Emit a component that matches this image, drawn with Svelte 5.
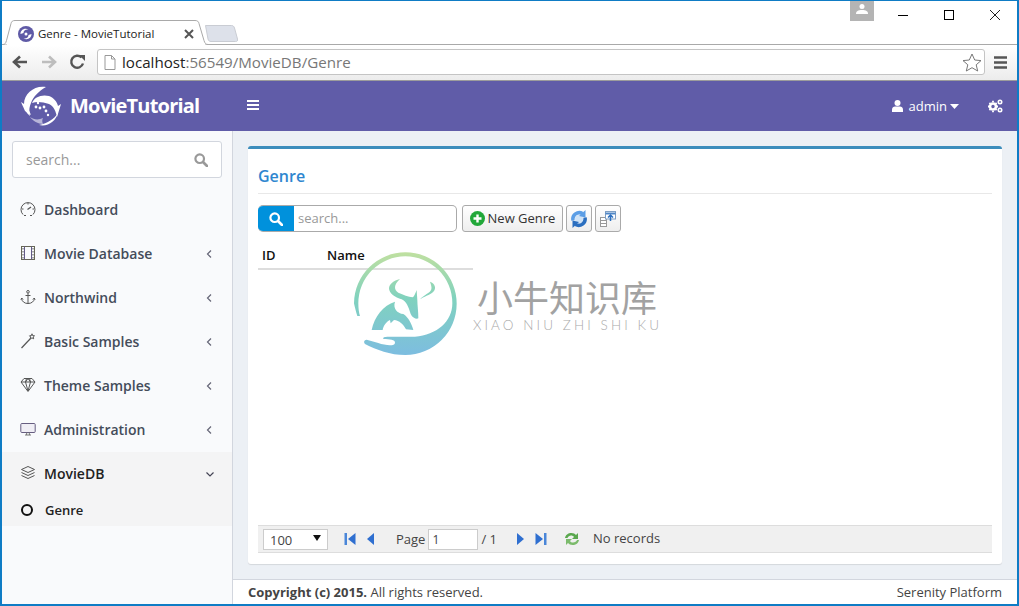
<script>
  const menu = [
    { label: 'Dashboard', icon: 'gauge', arrow: false },
    { label: 'Movie Database', icon: 'film', arrow: true },
    { label: 'Northwind', icon: 'anchor', arrow: true },
    { label: 'Basic Samples', icon: 'wand', arrow: true },
    { label: 'Theme Samples', icon: 'gem', arrow: true },
    { label: 'Administration', icon: 'desktop', arrow: true }
  ];
</script>

{#snippet searchIcon(c)}
  <svg width="14" height="14" viewBox="0 0 14 14" fill="none" stroke={c} stroke-width="2.2"><circle cx="5.7" cy="5.7" r="4.3"/><path d="M9 9l4 4" stroke-linecap="round" stroke-width="2.6"/></svg>
{/snippet}

{#snippet menuIcon(name)}
  <svg class="micon" width="16" height="16" viewBox="0 0 16 16" fill="none" stroke="#555" stroke-width="1">
    {#if name === 'gauge'}
      <path d="M3 13.500A7 7 0 1 1 13 13.500"/><path d="M4 14.500h8" stroke-dasharray="2 4"/><path d="M7.500 8.500l3.500-2.500" stroke-width="1.300"/><path d="M8 2v1.500M2 8h1.500M12.500 8H14" />
    {:else if name === 'film'}
      <rect x="1.500" y="1.500" width="13" height="13" stroke="#665"/><path d="M4.500 1.500v13M11.500 1.500v13" stroke="#635a88"/><path d="M3 3v11M13 3v11" stroke-dasharray="1.500 1.500"/>
    {:else if name === 'anchor'}
      <circle cx="8" cy="2.800" r="1.300"/><path d="M8 4.200V14.500M5.500 6.500h5M1.500 9.500c.5 3 3 5 6.500 5s6-2 6.500-5M.8 10.500l1-1.500 1.300 1.500M12.900 10.500l1.300-1.500 1 1.500"/>
    {:else if name === 'wand'}
      <path d="M1.500 15L10.500 5.500" stroke-width="1.200"/><path d="M12 .8l.6 1.800 1.900.2-1.300 1.200.5 1.800-1.700-.9-1.700.9.4-1.800L9.500 2.800l1.900-.2z"/>
    {:else if name === 'gem'}
      <path d="M4 1.500h8l3 3.500L8 14.500 1 5z"/><path d="M1 5h14M5.500 5L8 14M10.500 5L8 14M5.500 5L6.500 1.500M10.500 5L9.500 1.500M5.500 5L8 1.500l2.500 3.500"/>
    {:else if name === 'desktop'}
      <rect x=".8" y="2.500" width="14.400" height="9" rx="1" fill="#f0eef5" stroke="#665d80"/><path d="M5 14h6M6.800 11.500l-.3 2.500M9.200 11.500l.3 2.500" stroke="#777"/>
    {:else}
      <path d="M8 1.500l6.500 3L8 7.500l-6.500-3z"/><path d="M1.500 7.500L8 10.500l6.500-3M1.500 10.500L8 13.500l6.500-3"/>
    {/if}
  </svg>
{/snippet}

<div class="window">
  <div class="tabstrip">
    <div class="tab">
      <svg class="tabshape" width="212" height="26" viewBox="0 0 212 26"><path d="M0 24.500h1c2 0 2.500-1 3.500-4L9 3.500C9.500 1.500 10.500 .5 13 .5h180c2.500 0 3.500 1 4 3l5 17c.8 2.800 2 4 4 4h3" fill="#fff" stroke="#a9a9a9"/><rect x="5" y="23" width="198" height="3" fill="#fff"/></svg>
      <svg class="favicon" width="16" height="16" viewBox="0 0 16 16"><circle cx="8" cy="8" r="8" fill="#5f5aa6"/><path d="M2.500 8c0-4 4-6.500 8-4.500-3-.5-5 1-5 3.500zM13.500 8c0 4-4 6.500-8 4.500 3 .5 5-1 5-3.500z" fill="#fff"/><circle cx="8" cy="8" r="1.500" fill="#fff"/></svg>
      <span class="tabtitle">Genre - MovieTutorial</span>
      <svg class="tabx" width="10" height="10" viewBox="0 0 10 10"><path d="M1 1l8 8M9 1l-8 8" stroke="#555" stroke-width="2"/></svg>
    </div>
    <svg class="newtab" width="33" height="17" viewBox="0 0 33 17"><path d="M.5 .5h26c1.500 0 2.300.6 3 2.500l3 11c.4 1.500 0 2.500-2 2.500H6c-1.500 0-2.500-.6-3-2.500z" fill="#dde1ea" stroke="#c9ccd3"/></svg>
    <div class="spacer"></div>
    <div class="profile"><svg width="12" height="10" viewBox="0 0 12 10"><circle cx="6" cy="2.500" r="2.500" fill="#fff"/><path d="M0 10c0-3 2-4 6-4s6 1 6 4z" fill="#fff"/></svg></div>
    <div class="winbtn"><svg width="12" height="12" viewBox="0 0 12 12"><path d="M1 6.500h10" stroke="#000"/></svg></div>
    <div class="winbtn"><svg width="12" height="12" viewBox="0 0 12 12"><rect x="1.500" y="1.500" width="9" height="9" fill="none" stroke="#000"/></svg></div>
    <div class="winbtn last"><svg width="12" height="12" viewBox="0 0 12 12"><path d="M1 1l10 10M11 1L1 11" stroke="#222"/></svg></div>
  </div>

  <div class="toolbar">
    <svg class="navb" width="18" height="16" viewBox="0 0 18 16"><path d="M16 8H4M9 2.500L3 8l6 5.500" fill="none" stroke="#555" stroke-width="2.600"/></svg>
    <svg class="navb" width="18" height="16" viewBox="0 0 18 16"><path d="M2 8h12M9 2.500L15 8l-6 5.500" fill="none" stroke="#bdbdbd" stroke-width="2.600"/></svg>
    <svg class="navb" width="18" height="16" viewBox="0 0 18 16"><path d="M14 9.500A6 6 0 1 1 12.500 3.500" fill="none" stroke="#555" stroke-width="2.400"/><path d="M10 1h6v6z" fill="#555"/></svg>
    <div class="omnibox">
      <svg width="12" height="15" viewBox="0 0 12 15"><path d="M1 .5h6.500L11 4v10.500H1z" fill="#fff" stroke="#999"/><path d="M7.500 .5V4H11" fill="none" stroke="#999"/></svg>
      <span class="url"><b>localhost</b>:56549/MovieDB/Genre</span>
      <svg class="star" width="20" height="19" viewBox="0 0 20 19"><path d="M10 1l2.700 6 6.300.6-4.800 4.200 1.500 6.200L10 14.700 4.300 18l1.500-6.200L1 7.600 7.300 7z" fill="#fff" stroke="#777"/></svg>
    </div>
    <svg width="14" height="13" viewBox="0 0 14 13"><path d="M0 1.500h13M0 6.500h13M0 11.500h13" stroke="#555" stroke-width="2.400"/></svg>
  </div>

  <header class="apphead">
    <div class="brand">
      <svg width="40" height="40" viewBox="0 0 40 40">
        <g fill="#fff">
          <path d="M25 1C14-1 3 7 3 18c0 5 2 9 6 12-1-5-1-8 1-13 2-6 8-12 15-16z"/>
          <path d="M0 16l6 4 4 9-6-4z"/>
          <path d="M11 17c2-6 10-9 17-7 5 2 8 6 9 10l3-2-4 13c-1-5-3-11-8-13-6-2-12-3-17-1z"/>
          <path d="M9 31c4 3 9 3 13 1-1 2-1 4 0 6-5 0-10-3-13-7z" opacity=".55"/>
          <path d="M18 39c9 2 17-4 19-12-4 6-10 10-19 12z"/>
          <circle cx="15" cy="21" r="1.400"/><circle cx="19" cy="22" r="1.400"/><circle cx="23" cy="21" r="1.400"/><circle cx="25" cy="25" r="1.400"/><circle cx="27" cy="29" r="1.200"/><circle cx="17" cy="17" r="1.200"/>
        </g>
      </svg>
      <span class="brandtext">MovieTutorial</span>
    </div>
    <svg class="burger" width="12" height="12" viewBox="0 0 12 12"><path d="M0 2h12M0 6h12M0 10h12" stroke="#fff" stroke-width="2"/></svg>
    <div class="spacer"></div>
    <svg width="11" height="12" viewBox="0 0 11 12"><circle cx="5.500" cy="3" r="3" fill="#fff"/><path d="M0 12V9.500C0 7.500 1.500 6.500 3 6.500h5c1.500 0 3 1 3 3V12z" fill="#fff"/></svg>
    <span class="admin">admin</span>
    <svg class="caret" width="9" height="5" viewBox="0 0 9 5"><path d="M0 0h9L4.500 5z" fill="#fff"/></svg>
    <svg class="cogs" width="15" height="14" viewBox="0 0 15 14" fill="none" stroke="#fff"><circle cx="5" cy="7.500" r="3" stroke-width="2.600"/><path d="M5 1.800v1.400M5 11.800v1.400M0 7.500h1.400M8.600 7.500H10M1.400 3.900l1 1M7.600 10.100l1 1M1.400 11.100l1-1M7.600 4.900l1-1" stroke-width="1.800"/><circle cx="12" cy="3" r="1.700" stroke-width="1.600"/><circle cx="12" cy="11" r="1.700" stroke-width="1.600"/></svg>
  </header>

  <div class="body">
    <aside class="sidebar">
      <div class="sidesearch">
        <span>search...</span>
        {@render searchIcon('#999')}
      </div>
      <nav>
        {#each menu as m}
          <div class="item">
            {@render menuIcon(m.icon)}
            <span class="label">{m.label}</span>
            {#if m.arrow}
              <svg class="chev" width="6" height="10" viewBox="0 0 6 10"><path d="M5 1.500L1.500 5 5 8.500" fill="none" stroke="#667" stroke-width="1.200"/></svg>
            {/if}
          </div>
        {/each}
        <div class="openmenu">
          <div class="item active">
            {@render menuIcon('layers')}
            <span class="label">MovieDB</span>
            <svg class="chevd" width="10" height="6" viewBox="0 0 10 6"><path d="M1.500 1.500L5 5l3.500-3.500" fill="none" stroke="#445" stroke-width="1.200"/></svg>
          </div>
          <div class="subitem"><i class="ring"></i><span>Genre</span></div>
        </div>
      </nav>
    </aside>

    <div class="maincol">
      <main class="content">
        <section class="card">
          <h1>Genre</h1>
          <div class="tools">
            <div class="qsearch">
              <span class="addon">{@render searchIcon('#fff')}</span>
              <span class="ph">search...</span>
            </div>
            <div class="btn add">
              <svg width="15" height="15" viewBox="0 0 15 15"><circle cx="7.500" cy="7.500" r="7.500" fill="#22a83a"/><path d="M7.500 3.500v8M3.500 7.500h8" stroke="#fff" stroke-width="2.400"/></svg>
              <span class="addtext">New Genre</span>
            </div>
            <div class="btn ico">
              <svg width="18" height="18" viewBox="0 0 18 18" fill="none"><circle cx="9" cy="9" r="4" fill="#cfe3f7"/><path d="M3 10.500A6.500 6.500 0 0 1 12.500 3.500" stroke="#5b9ee6" stroke-width="3.500"/><path d="M15.500 0v7.500L9 6z" fill="#5b9ee6"/><path d="M15 7.500A6.500 6.500 0 0 1 5.500 14.500" stroke="#2b6fc0" stroke-width="3.500"/><path d="M2.500 18v-7.500L9 12z" fill="#2b6fc0"/></svg>
            </div>
            <div class="btn ico">
              <svg width="18" height="18" viewBox="0 0 18 18"><rect x="1.500" y="7.500" width="6" height="9" fill="#fff" stroke="#999"/><path d="M1.500 10.500h6M1.500 13.500h6" stroke="#999"/><rect x="6.500" y="1.500" width="10" height="7.500" fill="#fff" stroke="#7f9fc4"/><path d="M6.500 3.500h10" stroke="#4f86c6" stroke-width="2"/><path d="M11.500 11V6M9 7.500l2.500-2.500L14 7.500" fill="none" stroke="#2b6fc0" stroke-width="1.500"/></svg>
            </div>
          </div>
          <div class="gridhead">
            <span class="cid">ID</span>
            <span class="cname">Name</span>
          </div>
          <div class="gridbody"></div>
          <div class="pager">
            <div class="pagesize"><span>100</span><svg width="8" height="6" viewBox="0 0 8 6"><path d="M0 0h8L4 6z" fill="#111"/></svg></div>
            <svg class="p-first" width="12" height="12" viewBox="0 0 12 12"><path d="M.5 0h2.500v12H.5z" fill="#4a86d8"/><path d="M11.500 0v12L4 6z" fill="#2f6fd0"/></svg>
            <svg class="p-prev" width="7" height="12" viewBox="0 0 7 12"><path d="M7 0v12L0 6z" fill="#2f6fd0"/></svg>
            <span class="pg">Page</span>
            <div class="pageinput">1</div>
            <span class="of">/ 1</span>
            <svg class="p-next" width="7" height="12" viewBox="0 0 7 12"><path d="M0 0v12l7-6z" fill="#2f6fd0"/></svg>
            <svg class="p-last" width="12" height="12" viewBox="0 0 12 12"><path d="M.5 0v12L8 6z" fill="#2f6fd0"/><path d="M9 0h2.500v12H9z" fill="#4a86d8"/></svg>
            <svg class="p-reload" width="18" height="16" viewBox="0 0 18 16"><path d="M2 7c.5-3 3-5 6.500-5 2 0 3.500.7 4.500 2l2-2v6h-6l2-2c-.7-1-1.700-1.500-3-1.500C6.500 4.500 5 5.500 4.500 7z" fill="#5aa84e"/><path d="M16 9c-.5 3-3 5-6.500 5-2 0-3.500-.7-4.500-2l-2 2V8h6l-2 2c.7 1 1.700 1.500 3 1.500 2 0 3.500-1 4-2.500z" fill="#7cbb6c"/></svg>
            <span class="norec">No records</span>
          </div>
        </section>
      </main>
      <footer class="foot">
        <span><b>Copyright (c) 2015.</b> All rights reserved.</span>
        <span>Serenity Platform</span>
      </footer>
    </div>
  </div>

  <div class="watermark">
    <svg width="112" height="108" viewBox="0 0 112 108">
      <defs>
        <linearGradient id="wm" gradientUnits="userSpaceOnUse" x1="0" y1="36" x2="0" y2="345">
          <stop offset="0" stop-color="#c0e0a0"/>
          <stop offset=".45" stop-color="#80d2be"/>
          <stop offset="1" stop-color="#7dbde0"/>
        </linearGradient>
      </defs>
      <g transform="translate(-10,-8) scale(.33333)" fill="url(#wm)">
        <path d="M52 228C45 205 42 190 42 190A154 154 0 1 1 196 345C150 345 110 330 75 312C70 308 72 299 80 299L115 309C135 316 165 320 165 308C165 298 150 298 130 297C128 291 135 290 150 290L225 290C290 285 337 245 337 190A141 141 0 0 0 55 190C55 205 57 220 60 228Z"/>
        <path d="M180 117C160 122 148 132 147 145C147 160 165 172 185 178C200 185 205 200 212 222C218 235 230 238 235 235C235 215 232 195 232 180L230 150C226 160 222 170 218 172C205 170 190 165 175 158C162 150 160 135 180 117Z"/>
        <path d="M165 185C130 195 103 230 95 270L128 270C130 258 138 246 150 240L152 250L162 240C178 242 190 252 198 268L220 270C215 250 205 232 190 222C172 220 158 205 165 185Z"/>
        <path d="M270 125C285 130 290 145 280 155C270 165 250 170 240 178C252 165 270 160 274 148C276 140 272 132 270 125Z"/>
      </g>
    </svg>
    <div class="wmtext">
      <div class="cn">小牛知识库</div>
      <div class="en">XIAO NIU ZHI SHI KU</div>
    </div>
  </div>
</div>

<style>
  :global(body) { margin: 0; background: #fff; }
  .window {
    position: relative;
    box-sizing: border-box;
    width: 1019px;
    height: 606px;
    border: solid #0f7cc5;
    border-width: 1px 2px 2px 2px;
    display: flex;
    flex-direction: column;
    overflow: hidden;
    font-family: "Open Sans", sans-serif;
    color: #444;
    background: #fff;
  }
  .spacer { flex: 1; }
  .tabstrip {
    height: 44px;
    flex: none;
    box-sizing: border-box;
    display: flex;
    align-items: flex-start;
    padding-top: 19px;
    position: relative;
    background: linear-gradient(#a9a9a9, #a9a9a9) left 43px / 100% 1px no-repeat #fff;
  }
  .tab {
    position: relative;
    width: 203px;
    height: 25px;
    flex: none;
    display: flex;
    align-items: center;
    padding-left: 16px;
    box-sizing: border-box;
  }
  .tabshape { position: absolute; left: 0; top: 0; }
  .favicon { position: relative; margin-top: 2px; }
  .tabtitle { position: relative; font: 11.500px "Open Sans", sans-serif; color: #222; margin-left: 4px; margin-top: 1px; flex: 1; }
  .tabx { position: relative; margin-right: 11px; margin-top: 2px; }
  .newtab { margin-top: 5px; flex: none; }
  .profile {
    align-self: flex-start;
    width: 24px;
    height: 20px;
    margin-top: -19px;
    background: #b4b4b4;
    display: flex;
    align-items: center;
    justify-content: center;
    margin-right: 6px;
  }
  .profile svg { margin-top: -4px; }
  .winbtn {
    width: 46px;
    margin-top: -11px;
    display: flex;
    justify-content: center;
  }
  .last { margin-right: -1px; }
  .toolbar {
    height: 36px;
    flex: none;
    box-sizing: border-box;
    display: flex;
    align-items: center;
    gap: 11px;
    padding: 0 9px 1px 9px;
    background: linear-gradient(#fff, #ececec);
    border-bottom: 1px solid #9c9c9c;
  }
  .navb { flex: none; }
  .omnibox {
    flex: 1;
    height: 26px;
    margin: 0 -2px 0 -1px;
    box-sizing: border-box;
    display: flex;
    align-items: center;
    border: 1px solid #c4c4c4;
    border-radius: 3px;
    background: #fff;
    padding: 0 2px 0 6px;
    gap: 6px;
  }
  .url { flex: 1; font-size: 15.150px; color: #777; }
  .url b { font-weight: 400; color: #222; }
  .apphead {
    height: 50px;
    flex: none;
    background: #605ca8;
    display: flex;
    align-items: center;
    padding-right: 14px;
    color: #fff;
  }
  .brand { width: 245px; padding-left: 19px; box-sizing: border-box; display: flex; align-items: center; gap: 9px; flex: none; }
  .brandtext { font-size: 20px; font-weight: 700; letter-spacing: -.8px; margin-top: -2px; }
  .burger { flex: none; margin-top: -3px; }
  .admin { font-size: 13px; margin-left: 6px; }
  .caret { margin: 0 0 0 3px; }
  .cogs { margin-left: 29px; }
  .body { flex: 1; min-height: 0; display: flex; }
  .sidebar {
    width: 231px;
    flex: none;
    box-sizing: border-box;
    background: #f9fafc;
    border-right: 1px solid #d2d6de;
    padding-top: 10px;
  }
  .sidesearch {
    margin: 0 10px;
    height: 37px;
    box-sizing: border-box;
    background: #fff;
    border: 1px solid #d2d6de;
    border-radius: 3px;
    padding: 0 13px;
    display: flex;
    align-items: center;
    justify-content: space-between;
    font-size: 14px;
    color: #999;
  }
  nav { margin-top: 10px; }
  .item {
    height: 44px;
    display: flex;
    align-items: center;
    padding: 0 18px 0 18px;
    font-size: 14px;
    font-weight: 600;
    color: #444c5a;
  }
  .micon { flex: none; margin-right: 8px; margin-top: -2px; }
  .label { flex: 1; margin-top: -2px; }
  .chev { margin-right: 2px; }
  .chevd { margin-right: -1px; }
  .openmenu { background: #f4f4f5; height: 74px; }
  .active { color: #222; }
  .subitem { display: flex; align-items: center; padding-left: 19px; font-size: 13px; font-weight: 600; color: #222; margin-top: -1px; height: 30px; }
  .ring { width: 12px; height: 12px; box-sizing: border-box; border: 2px solid #111; border-radius: 50%; margin-right: 12px; }
  .maincol { flex: 1; min-width: 0; display: flex; flex-direction: column; }
  .content { flex: 1; min-height: 0; background: #ecf0f5; padding: 15px; box-sizing: border-box; display: flex; }
  .card {
    flex: 1;
    box-sizing: border-box;
    background: #fff;
    border-top: 3px solid #3c8dbc;
    border-radius: 3px;
    box-shadow: 0 1px 1px rgba(0,0,0,.1);
    padding: 0 10px 11px;
    display: flex;
    flex-direction: column;
  }
  h1 {
    margin: 0;
    height: 45px;
    box-sizing: border-box;
    border-bottom: 1px solid #e8e8e8;
    font-size: 16px;
    font-weight: 600;
    color: #2e86cf;
    line-height: 55px;
    flex: none;
  }
  .tools { display: flex; height: 27px; margin-top: 11px; flex: none; }
  .qsearch {
    width: 199px;
    box-sizing: border-box;
    display: flex;
    align-items: center;
    border: 1px solid #aaa;
    border-left: 0;
    border-radius: 5px;
    overflow: hidden;
    font-size: 13px;
    color: #999;
  }
  .addon { width: 36px; height: 27px; background: #0091dc; display: flex; align-items: center; justify-content: center; margin-top: -1px; margin-bottom: -1px; }
  .ph { margin-left: 4px; margin-top: -2px; }
  .btn {
    box-sizing: border-box;
    height: 27px;
    border: 1px solid #aaa;
    border-radius: 3px;
    background: linear-gradient(#fff, #eee);
    display: flex;
    align-items: center;
    justify-content: center;
    font-size: 13px;
    color: #333;
    margin-left: 3px;
  }
  .add { width: 101px; margin-left: 5px; gap: 3px; }
  .addtext { margin-top: -2px; }
  .ico { width: 26px; }
  .gridhead { height: 38px; width: 215px; flex: none; box-sizing: border-box; border-bottom: 2px solid #ddd; display: flex; align-items: center; padding: 10px 0 0 4px; font-size: 13px; font-weight: 600; color: #111; }
  .cid { width: 65px; }
  .gridbody { flex: 1; }
  .pager {
    height: 28px;
    flex: none;
    box-sizing: border-box;
    background: #f0f0f0;
    border-top: 1px solid #ddd;
    border-bottom: 1px solid #ddd;
    display: flex;
    align-items: center;
    padding-left: 5px;
    font-size: 13px;
    color: #444;
  }
  .pagesize {
    width: 65px;
    height: 21px;
    box-sizing: border-box;
    background: #fff;
    border: 1px solid #ccc;
    display: flex;
    align-items: center;
    justify-content: space-between;
    padding: 1px 6px 0 6px;
  }
  .pagesize svg { margin-top: -4px; }
  .p-first { margin-left: 16px; }
  .p-prev { margin-left: 11px; }
  .pg { margin-left: 22px; }
  .pageinput { width: 50px; height: 21px; box-sizing: border-box; background: #fff; border: 1px solid #ccc; margin-left: 3px; padding: 1px 0 0 3px; font-size: 12px; line-height: 18px; }
  .of { margin-left: 3px; }
  .p-next { margin-left: 20px; }
  .p-last { margin-left: 11px; }
  .p-reload { margin-left: 16px; }
  .norec { margin-left: 12px; margin-top: -2px; }
  .foot {
    height: 25px;
    flex: none;
    box-sizing: border-box;
    border-top: 1px solid #d2d6de;
    display: flex;
    align-items: center;
    justify-content: space-between;
    padding: 0 15px;
    font-size: 13px;
    color: #444;
    background: #fff;
  }
  .watermark {
    position: absolute;
    left: 348px;
    top: 247px;
    display: flex;
    pointer-events: none;
  }
  .wmtext { margin-left: 15px; margin-top: 28px; }
  .cn { font-family: "Noto Sans CJK SC", sans-serif; font-weight: 400; font-size: 36px; line-height: 40px; color: #a2a2a2; width: 190px; }
  .en { font-family: "Lato", sans-serif; font-weight: 300; font-size: 13.500px; line-height: 14px; letter-spacing: 3.080px; color: #aaa; margin-left: -4px; white-space: nowrap; margin-top: 2px; }
</style>
